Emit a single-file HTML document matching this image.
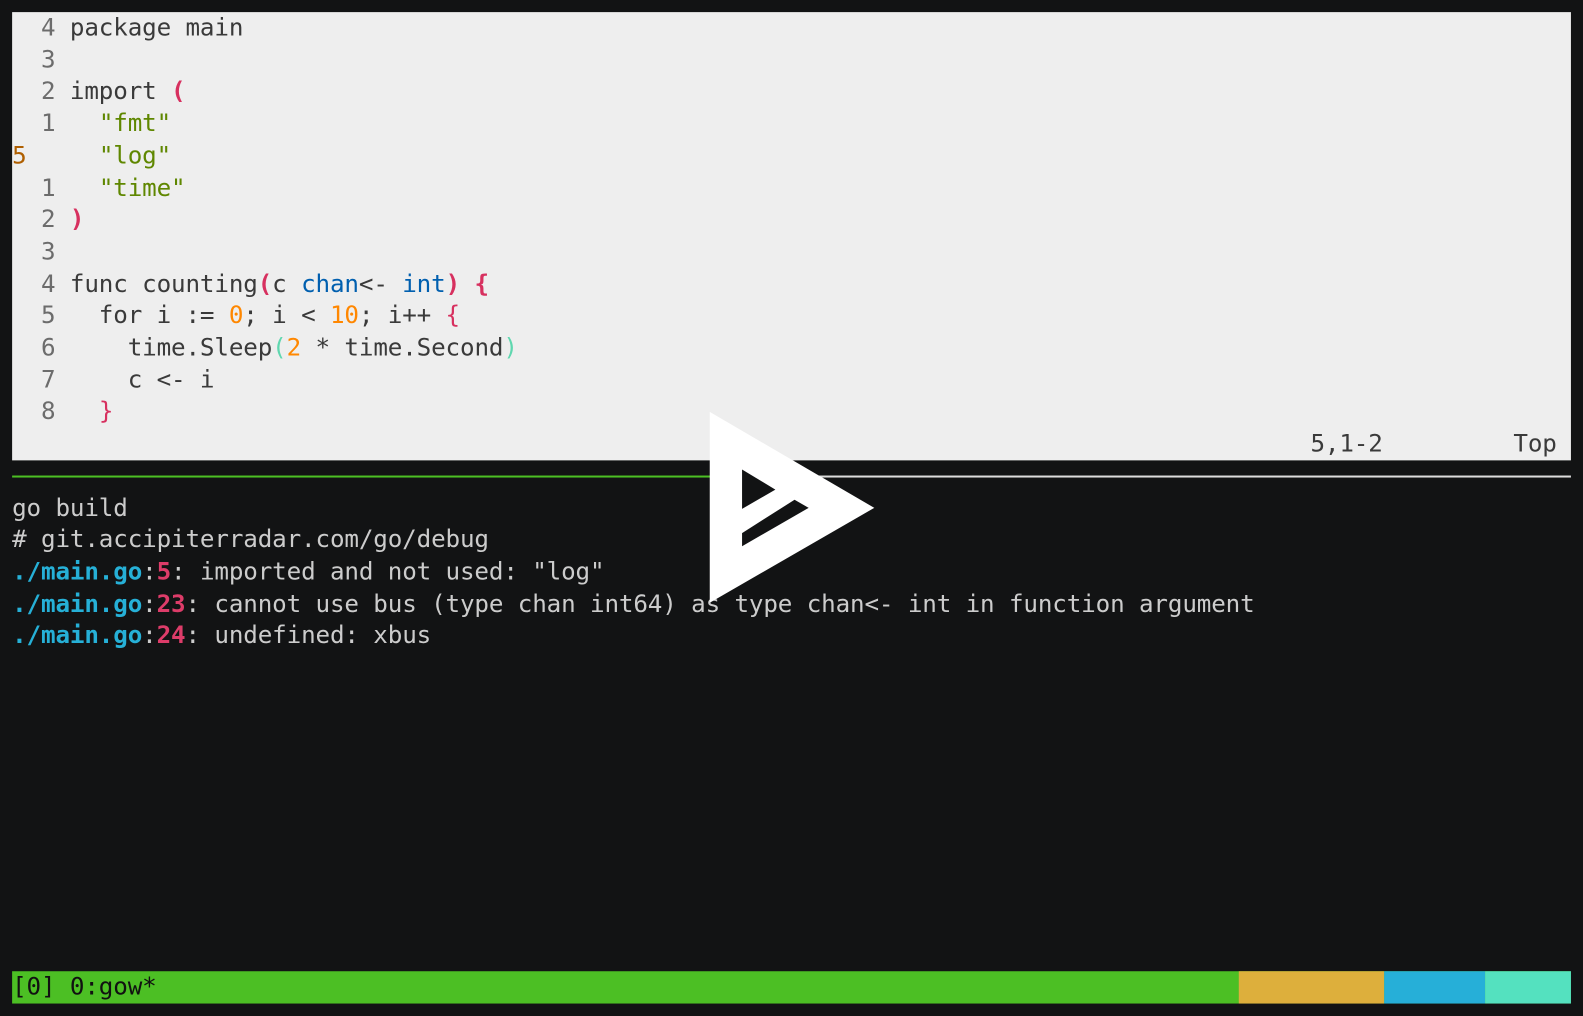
<!DOCTYPE html>
<html><head><style>
html,body{margin:0;padding:0;background:#121314;width:1583px;height:1016px;overflow:hidden}
#w{position:fixed;left:0;top:0;width:1568px;height:1007px;overflow:hidden;transform:scale(1.0096);transform-origin:0 0}
.t{position:absolute;left:12px;top:12px;width:1544px;height:983px;font-family:"DejaVu Sans Mono","Liberation Mono",monospace;font-size:24px;letter-spacing:-0.14px;line-height:31.7px;white-space:pre;color:#cccccc}
.r{position:absolute;left:0;height:31.7px;width:1544px}
.lt{color:#3a3a3a}
.n{color:#6c6c6c}.p{color:#d7305f}.pb{color:#d7305f;font-weight:bold}.s{color:#5f8700}.b{color:#005faf}.o{color:#ff8700}.c{color:#5fd7af}.y{color:#af5f00}
.cy{color:#26b0d7;font-weight:bold}.pk{color:#dd3c69;font-weight:bold}
svg{position:absolute;left:0;top:0;display:block}
</style></head><body><div id="w">
<div class="t">
<div style="position:absolute;left:0;top:0;width:1544px;height:444px;background:#eeeeee"></div>
<div class="r lt" style="top:0"><span class="n">  4 </span>package main</div>
<div class="r lt" style="top:31.7px"><span class="n">  3 </span></div>
<div class="r lt" style="top:63.4px"><span class="n">  2 </span>import <span class="pb">(</span></div>
<div class="r lt" style="top:95.1px"><span class="n">  1 </span>  <span class="s">"fmt"</span></div>
<div class="r lt" style="top:126.8px"><span class="y">5   </span>  <span class="s">"log"</span></div>
<div class="r lt" style="top:158.5px"><span class="n">  1 </span>  <span class="s">"time"</span></div>
<div class="r lt" style="top:190.2px"><span class="n">  2 </span><span class="pb">)</span></div>
<div class="r lt" style="top:221.9px"><span class="n">  3 </span></div>
<div class="r lt" style="top:253.6px"><span class="n">  4 </span>func counting<span class="pb">(</span>c <span class="b">chan</span>&lt;- <span class="b">int</span><span class="pb">)</span> <span class="pb">{</span></div>
<div class="r lt" style="top:285.3px"><span class="n">  5 </span>  for i := <span class="o">0</span>; i &lt; <span class="o">10</span>; i++ <span class="p">{</span></div>
<div class="r lt" style="top:317px"><span class="n">  6 </span>    time.Sleep<span class="c">(</span><span class="o">2</span> * time.Second<span class="c">)</span></div>
<div class="r lt" style="top:348.7px"><span class="n">  7 </span>    c &lt;- i</div>
<div class="r lt" style="top:380.4px"><span class="n">  8 </span>  <span class="p">}</span></div>
<div class="r lt" style="top:412.1px"><span style="position:absolute;left:1286px">5,1-2</span><span style="position:absolute;left:1487px">Top</span></div>
<div style="position:absolute;top:459px;left:0;width:728px;height:2px;background:#4cbf24"></div>
<div style="position:absolute;top:459px;left:728px;width:816px;height:2px;background:#dddddd"></div>
<div class="r" style="top:475.5px">go build</div>
<div class="r" style="top:507.2px"># git.accipiterradar.com/go/debug</div>
<div class="r" style="top:538.9px"><span class="cy">./main.go</span>:<span class="pk">5</span>: imported and not used: "log"</div>
<div class="r" style="top:570.6px"><span class="cy">./main.go</span>:<span class="pk">23</span>: cannot use bus (type chan int64) as type chan&lt;- int in function argument</div>
<div class="r" style="top:602.3px"><span class="cy">./main.go</span>:<span class="pk">24</span>: undefined: xbus</div>
<div class="r" style="top:950px;height:32px;background:#4cbf24;color:#111">[0] 0:gow*</div>
<div style="position:absolute;top:950px;height:32px;left:1215px;width:144px;background:#ddaf3c"></div>
<div style="position:absolute;top:950px;height:32px;left:1359px;width:100px;background:#26afd8"></div>
<div style="position:absolute;top:950px;height:32px;left:1459px;width:85px;background:#54e1bf"></div>
</div>
<svg width="1568" height="1007">
<polygon points="703,408 866,503 703,597" fill="#fff"/>
<polygon points="735,465 768,485 735,504" fill="#121314"/>
<polygon points="735,528 787,495 801,503 735,541" fill="#121314"/>
</svg>
</div></body></html>
